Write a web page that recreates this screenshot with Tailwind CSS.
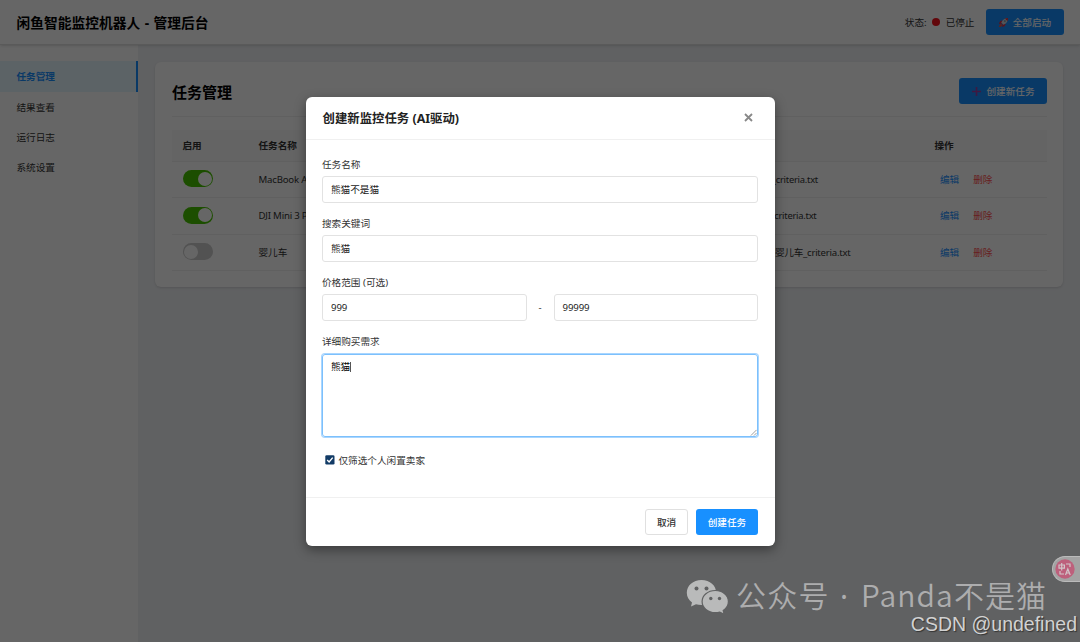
<!DOCTYPE html>
<html lang="zh-CN">
<head>
    <meta charset="UTF-8">
    <meta name="viewport" content="width=device-width, initial-scale=1.0">
    <title>闲鱼智能监控机器人 - 管理后台</title>
    <script src="https://cdn.jsdelivr.net/npm/@tailwindcss/browser@4"></script>
</head>
<body class="relative flex h-[642px] w-[1080px] flex-col overflow-hidden bg-[#f0f2f5] font-['Noto_Sans','Noto_Sans_CJK_SC',sans-serif] text-[9.65px] leading-[14px] text-[#333]">
    <!-- Header -->
    <header class="z-10 flex h-[45px] shrink-0 items-center justify-between border-b border-[#e0e0e0] bg-white pl-[16.5px] pr-[16.5px] shadow-sm">
        <h1 class="pt-[2px] text-[13.75px] font-bold text-black [word-spacing:0.8px]">闲鱼智能监控机器人 - 管理后台</h1>
        <div class="flex items-center">
            <span class="pt-[2px]">状态:</span>
            <span class="ml-[5px] mr-[6px] size-[8px] rounded-full bg-[#f5131d]"></span>
            <span class="pt-[2px]">已停止</span>
            <button class="ml-[11px] flex h-[26px] w-[78px] items-center justify-center gap-[4px] rounded-[3px] bg-[#1890ff] font-medium text-white">
                <svg class="mt-px size-[11px]" viewBox="0 0 24 24"><path d="M9 7 4 10l-2 5 7-1zM17 15l-3 5-5 2 1-7z" fill="#dd2e44"/><path d="M22 2c-7 0-12 4-15 10l5 5c6-3 10-8 10-15z" fill="#ccd6dd"/><path d="M22 2l-7 1 6 6z" fill="#dd2e44"/><circle cx="15" cy="9" r="2.2" fill="#8a9fb0"/><path d="M7 15c-3 0-4 3-5 7 4 0 7-2 7-5z" fill="#f0503a"/></svg>
                <span class="pt-[2px]">全部启动</span>
            </button>
        </div>
    </header>

    <div class="flex grow">
        <!-- Sidebar -->
        <nav class="flex w-[138px] shrink-0 flex-col bg-white pt-[16px]">
            <a class="flex h-[31px] items-center border-r-2 border-[#1890ff] bg-[#e6f7ff] pl-[16.5px] pt-px font-bold text-[#1890ff]">任务管理</a>
            <a class="flex h-[30.4px] items-center pl-[16.5px] pt-px">结果查看</a>
            <a class="flex h-[30.4px] items-center pl-[16.5px] pt-px">运行日志</a>
            <a class="flex h-[30.4px] items-center pl-[16.5px] pt-px">系统设置</a>
        </nav>

        <!-- Task list -->
        <main class="grow pl-[17px] pr-[17px] pt-[17px]">
            <section class="h-[225px] rounded-[6px] bg-white pl-[17px] pr-4 pt-4 shadow-sm">
                <div class="flex h-[39px] items-start justify-between border-b border-[#f0f0f0]">
                    <h2 class="pt-[5px] text-[15px] leading-[18px] font-bold text-black">任务管理</h2>
                    <button class="flex h-[26px] w-[88px] items-center justify-center gap-[4px] rounded-[3px] bg-[#1890ff] font-medium text-white">
                        <svg class="mt-px size-[11px]" viewBox="0 0 11 11"><path d="M5.5 1v9M1 5.5h9" stroke="#9b3fa5" stroke-width="1.6"/></svg>
                        <span class="pt-[2px]">创建新任务</span>
                    </button>
                </div>
                <table class="mt-[13px] w-full table-fixed border-collapse">
                    <thead>
                        <tr class="h-[31px] border-b border-[#f0f0f0] bg-[#fafafa] text-left">
                            <th class="w-[76px] pl-[10.5px] pt-px font-bold">启用</th>
                            <th class="w-[300px] pl-[10.5px] pt-px font-bold">任务名称</th>
                            <th class="w-[376px]"></th>
                            <th class="pl-[10.5px] pt-px font-bold">操作</th>
                        </tr>
                    </thead>
                    <tbody>
                        <tr class="h-[36.5px] border-b border-[#f0f0f0]">
                            <td class="pb-px pl-[10.5px]"><span class="flex h-[17px] w-[30.5px] items-center justify-end rounded-full bg-[#48c400] pr-[1.5px]"><i class="size-[14px] rounded-full bg-white"></i></span></td>
                            <td class="pl-[10.5px] pt-px tracking-[-0.2px]">MacBook Air M1</td>
                            <td class="pt-px"><span class="block w-[270px] text-right text-[9.4px] tracking-[-0.25px]">macbook_criteria.txt</span></td>
                            <td class="pl-4 pt-px"><span class="text-[#1890ff]">编辑</span><span class="ml-[14px] text-[#ff4d4f]">删除</span></td>
                        </tr>
                        <tr class="h-[36.5px] border-b border-[#f0f0f0]">
                            <td class="pb-px pl-[10.5px]"><span class="flex h-[17px] w-[30.5px] items-center justify-end rounded-full bg-[#48c400] pr-[1.5px]"><i class="size-[14px] rounded-full bg-white"></i></span></td>
                            <td class="pl-[10.5px] pt-px tracking-[-0.2px]">DJI Mini 3 Pro</td>
                            <td class="pt-px"><span class="block w-[268.5px] text-right text-[9.4px] tracking-[-0.25px]">dji_criteria.txt</span></td>
                            <td class="pl-4 pt-px"><span class="text-[#1890ff]">编辑</span><span class="ml-[14px] text-[#ff4d4f]">删除</span></td>
                        </tr>
                        <tr class="h-[36.5px] border-b border-[#f0f0f0]">
                            <td class="pb-px pl-[10.5px]"><span class="flex h-[17px] w-[30.5px] items-center rounded-full bg-[#ccc] pl-[1px]"><i class="size-[14px] rounded-full bg-white"></i></span></td>
                            <td class="pl-[10.5px] pt-px">婴儿车</td>
                            <td class="pt-px"><span class="block w-[302.5px] text-right tracking-[-0.25px]">婴儿车_criteria.txt</span></td>
                            <td class="pl-4 pt-px"><span class="text-[#1890ff]">编辑</span><span class="ml-[14px] text-[#ff4d4f]">删除</span></td>
                        </tr>
                    </tbody>
                </table>
            </section>
        </main>
    </div>

    <!-- Modal -->
    <div class="absolute inset-0 z-20 flex justify-center bg-black/60 pt-[97px]">
        <div class="flex h-[449px] w-[469px] flex-col rounded-[6px] bg-white shadow-[0_4px_12px_rgba(0,0,0,0.4)]">
            <div class="flex h-[43px] shrink-0 items-center justify-between border-b border-[#f0f0f0] pl-[17px] pr-[22px]">
                <h3 class="pt-[2px] text-[12.4px] font-bold text-[#222]">创建新监控任务 (AI驱动)</h3>
                <svg class="mb-[2px] size-[9px]" viewBox="0 0 9 9"><path d="M1 1l7 7M8 1L1 8" stroke="#888" stroke-width="1.8"/></svg>
            </div>
            <div class="grow px-[16.5px] pt-[17px]">
                <label class="block h-[19px] pt-px">任务名称</label>
                <div class="flex h-[26.5px] items-center rounded-[3px] border border-[#e2e2e2] px-2 pt-px text-[#222]">熊猫不是猫</div>
                <label class="mt-[13.5px] block h-[19px] pt-px">搜索关键词</label>
                <div class="flex h-[26.5px] items-center rounded-[3px] border border-[#e2e2e2] px-2 pt-px text-[#222]">熊猫</div>
                <label class="mt-[13.5px] block h-[19px] pt-px">价格范围 (可选)</label>
                <div class="flex items-center">
                    <div class="flex h-[26.5px] w-[204.5px] items-center rounded-[3px] border border-[#e2e2e2] px-2 pt-[2px] tracking-[-0.1px] text-[#222]">999</div>
                    <span class="grow pt-px text-center">-</span>
                    <div class="flex h-[26.5px] w-[204.5px] items-center rounded-[3px] border border-[#e2e2e2] px-2 pt-[2px] tracking-[-0.1px] text-[#222]">99999</div>
                </div>
                <label class="mt-[13.5px] block h-[20px] pt-px">详细购买需求</label>
                <div class="flex h-[83px] justify-between rounded-[3px] border border-[#7cc0fc] pl-2 pt-[5px] text-black shadow-[0_0_0_1px_#a9d6ff]">
                    <span class="relative h-[14px]">熊猫<i class="absolute right-[-1px] top-[2px] h-[10px] w-px bg-[#555]"></i></span>
                    <svg class="size-[7px] self-end" viewBox="0 0 8 8"><path d="M1 7.5L7.5 1M4.5 7.5l3-3" stroke="#777" stroke-width=".8"/></svg>
                </div>
                <div class="mt-[17px] flex items-center gap-[4px] pl-[2.5px]">
                    <svg class="mb-[2px] size-[10px]" viewBox="0 0 10 10"><rect x=".3" y=".3" width="9.2" height="9.2" rx="1.3" fill="#123b66"/><path d="M2.2 5.1l1.9 1.9 3.6-4.4" fill="none" stroke="#fff" stroke-width="1.4"/></svg>
                    <span>仅筛选个人闲置卖家</span>
                </div>
            </div>
            <div class="flex h-[49px] shrink-0 items-start justify-end gap-2 border-t border-[#f0f0f0] pr-[16.5px] pt-[11px]">
                <button class="h-[26px] w-[43px] rounded-[3px] border border-[#e0e0e0] pt-[2px] font-medium">取消</button>
                <button class="h-[26px] w-[62px] rounded-[3px] bg-[#1890ff] pt-[2px] font-medium text-white">创建任务</button>
            </div>
        </div>
    </div>

    <!-- Floating translate button -->
    <div class="absolute right-0 top-[556px] z-30 flex h-[26px] w-[28px] items-center rounded-l-full border border-r-0 border-[#bbb] bg-[#a3a3a3] pl-[2px]">
        <svg class="size-5" viewBox="0 0 20 20"><circle cx="10" cy="10" r="9.7" fill="#bd607c"/><path d="M4 6h5.4v3.2H4zM6.7 4v7.4M11 5h4v3M5 12v3h4M10.5 16l2.300-6 2.400 6M11.400 14h3" fill="none" stroke="#d2c5c9" stroke-width="1.2"/></svg>
    </div>

    <!-- Watermarks -->
    <div class="absolute left-[686px] top-[576px] z-30 flex h-[38px] items-center text-[#adadae]">
        <svg class="mt-[3px] h-[36px] w-[43px]" viewBox="0 0 43 36"><path d="M15.5 1C7 1 .8 6.7.8 13.7c0 4 2 7.4 5.2 9.7l-1 4.2 5-2.4c1.700.5 3.500.8 5.500.8 8.500 0 14.700-5.300 14.700-12.300S24 1 15.500 1z" fill="#b9baba"/><path d="M29.300 11.500c-7.500 0-13.200 5-13.200 11.100s5.700 11.100 13.200 11.100c1.600 0 3.100-.2 4.500-.6l4.400 2.200-1-3.700c3.200-2 5.200-5.300 5.200-9 0-6.100-5.600-11.100-13.100-11.100z" fill="#b9baba" stroke="#606162" stroke-width="1.200"/><g fill="#606162"><circle cx="10.500" cy="9.500" r="2"/><circle cx="20.500" cy="9.500" r="2"/><circle cx="24.800" cy="19.500" r="1.700"/><circle cx="33.500" cy="19.500" r="1.700"/></g></svg>
        <span class="ml-[7px] flex whitespace-nowrap font-['Noto_Sans_CJK_SC',sans-serif] text-[30px] leading-[38px] tracking-[1.2px]"><span class="w-[93px] font-[350]">公众号</span><span class="w-[32px] pl-[11px] pt-[3px] font-['Noto_Sans',sans-serif]">·</span><span class="font-[350] tracking-[1.1px]">Panda不是猫</span></span>
    </div>
    <div class="absolute bottom-[8px] right-[3px] z-30 font-['Liberation_Sans',sans-serif] text-[19.5px] leading-5 text-[#d2d2d2] [text-shadow:1px_1px_1px_#333]">CSDN @undefined</div>
</body>
</html>
